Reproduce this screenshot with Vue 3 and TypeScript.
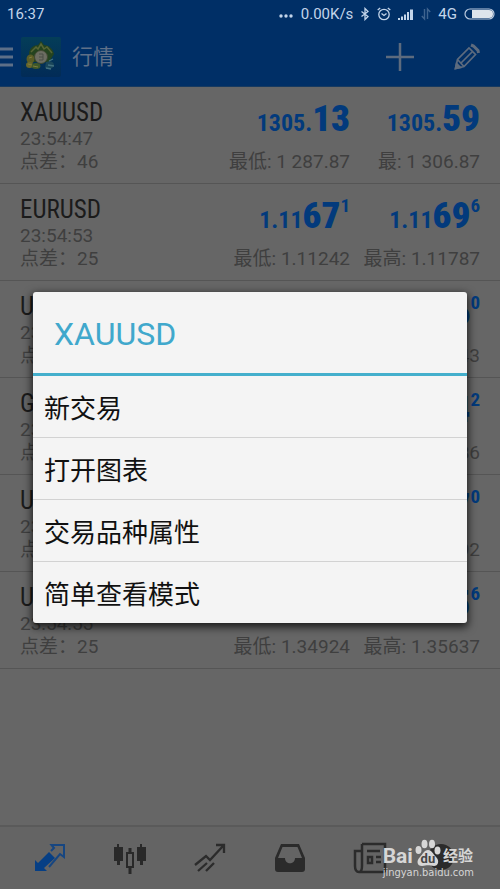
<script setup lang="ts">
interface Price {
  small: string
  big: string
  tip?: string
}

interface Quote {
  symbol: string
  time: string
  spread: number
  bid: Price
  ask: Price
  low: string
  highLabel: string
  high: string
}

const quotes: Quote[] = [
  { symbol: 'XAUUSD', time: '23:54:47', spread: 46, bid: { small: '1305.', big: '13' }, ask: { small: '1305.', big: '59' }, low: '1 287.87', highLabel: '最:', high: '1 306.87' },
  { symbol: 'EURUSD', time: '23:54:53', spread: 25, bid: { small: '1.11', big: '67', tip: '1' }, ask: { small: '1.11', big: '69', tip: '6' }, low: '1.11242', highLabel: '最高:', high: '1.11787' },
  { symbol: 'USDCHF', time: '23:54:53', spread: 28, bid: { small: '0.97', big: '73', tip: '2' }, ask: { small: '0.97', big: '76', tip: '0' }, low: '0.97201', highLabel: '最高:', high: '0.97943' },
  { symbol: 'GBPUSD', time: '23:54:54', spread: 30, bid: { small: '1.22', big: '41', tip: '2' }, ask: { small: '1.22', big: '44', tip: '2' }, low: '1.22081', highLabel: '最高:', high: '1.22586' },
  { symbol: 'USDJPY', time: '23:54:54', spread: 23, bid: { small: '103.', big: '24', tip: '7' }, ask: { small: '103.', big: '27', tip: '0' }, low: '102.805', highLabel: '最高:', high: '103.892' },
  { symbol: 'USDCAD', time: '23:54:55', spread: 25, bid: { small: '1.35', big: '13', tip: '1' }, ask: { small: '1.35', big: '15', tip: '6' }, low: '1.34924', highLabel: '最高:', high: '1.35637' },
]

const actions: string[] = ['新交易', '打开图表', '交易品种属性', '简单查看模式']
</script>

<template>
  <div class="screen">
    <div class="status">
      <span>16:37</span>
      <div class="status-right">
        <svg class="dots" width="16" height="14" viewBox="0 0 16 14"><circle cx="3" cy="9" r="1.7" /><circle cx="8" cy="9" r="1.7" /><circle cx="13" cy="9" r="1.7" /></svg>
        <span>0.00K/s</span>
        <svg class="line" width="10" height="14" viewBox="0 0 10 14"><path d="M1.500 4.500l6.500 5L5 12.500v-11l3 3-6.500 5" stroke-width="1.3" /></svg>
        <svg class="line" width="14" height="14" viewBox="0 0 14 14"><circle cx="7" cy="7.5" r="5.2" stroke-width="1.3" /><path d="M4.5 6.5L7 8.5l2.5-2M.7 3L3.2.9M13.3 3L10.8.9" stroke-width="1.3" /></svg>
        <svg class="fill" width="16" height="14" viewBox="0 0 16 14"><path d="M0 11h2v2H0zM3 9.500h2V13H3zM6 7.500h2V13H6zM9 5h2v8H9zM12 2.500h3V13h-3z" /></svg>
        <svg class="line faint" width="10" height="14" viewBox="0 0 10 14"><path d="M3.500 2v10L.8 9M6.500 12V2l2.700 3" stroke-width="1.4" /></svg>
        <span>4G</span>
        <svg width="32" height="14" viewBox="0 0 32 14"><rect x="1" y="2" width="29" height="10" rx="5" fill="none" stroke="#b9c9de" stroke-width="1.2" /><path d="M8 3h17a4 4 0 0 1 0 8H8z" fill="#dde4ec" /></svg>
      </div>
    </div>

    <header class="bar">
      <button class="icon menu" aria-label="菜单">
        <svg width="13" height="20" viewBox="0 0 13 20"><path d="M0 2h13M0 10h13M0 18h13" stroke="#5d6f88" stroke-width="3" /></svg>
      </button>
      <svg class="logo" width="40" height="40" viewBox="0 0 40 40">
        <defs>
          <linearGradient id="sky" x1="0" y1="0" x2="0" y2="1"><stop offset="0" stop-color="#043d58" /><stop offset="1" stop-color="#022b57" /></linearGradient>
        </defs>
        <rect width="40" height="40" rx="2" fill="url(#sky)" />
        <path d="M8 17c0-6 5-9 9-9l3-4 3 4c5 0 9 4 10 9l-5 8H12z" fill="#24431f" />
        <path d="M10 15l5-5 2 2 3-5 3 5 3-2 5 6" fill="none" stroke="#566434" stroke-width="1.500" />
        <ellipse cx="9.500" cy="22" rx="4" ry="4.500" fill="#5a5c26" /><ellipse cx="8.500" cy="28" rx="3.500" ry="3" fill="#68662b" />
        <ellipse cx="15" cy="29" rx="4.500" ry="3" fill="#3f5829" />
        <path d="M8 21l3-1M7 27l4 1M12 29l5 1" stroke="#807c3c" />
        <path d="M25 25c4-2 8 0 8 3s-5 5-9 3z" fill="#1a465a" />
        <path d="M28 24l4-2M27 28l6 1M25 31l5 1" stroke="#42707e" stroke-width="1.300" />
        <circle cx="20" cy="20" r="6.500" fill="#6c6d62" stroke="#3f4830" /><path d="M18 17h4v6h-4M18 20h4" fill="none" stroke="#4a4e46" />
      </svg>
      <h1>行情</h1>
      <button class="icon add" aria-label="添加"><svg width="28" height="28" viewBox="0 0 28 28"><path d="M14 0v28M0 14h28" stroke="#5d6b7e" stroke-width="2.500" /></svg></button>
      <button class="icon edit" aria-label="编辑">
        <svg width="28" height="28" viewBox="0 0 28 28" fill="none" stroke="#5d6b7e" stroke-width="1.700"><path d="M2.500 25.500l2-9L16 5l6.500 6.500-11.500 12zM4.500 16.500l6.500 7M8 20L19.500 8.500" /><path d="M18 2l2.500 1L25 7.500l.5 2.500" stroke-width="3" /><path d="M2.500 25.500l1-5 4 4z" fill="#5d6b7e" /></svg>
      </button>
    </header>

    <main class="quotes">
      <article v-for="q in quotes" :key="q.symbol" class="quote">
        <div class="info">
          <h2>{{ q.symbol }}</h2>
          <p>{{ q.time }}</p>
          <p>点差：{{ q.spread }}</p>
        </div>
        <div class="side">
          <div class="price">{{ q.bid.small }}<b>{{ q.bid.big }}</b><i v-if="q.bid.tip">{{ q.bid.tip }}</i></div>
          <p>最低: {{ q.low }}</p>
        </div>
        <div class="side">
          <div class="price">{{ q.ask.small }}<b>{{ q.ask.big }}</b><i v-if="q.ask.tip">{{ q.ask.tip }}</i></div>
          <p>{{ q.highLabel }} {{ q.high }}</p>
        </div>
      </article>
    </main>

    <nav class="tabs">
      <button class="icon" aria-label="行情"><svg width="32" height="32" viewBox="0 0 32 32"><path d="M1 29V18l3 3L15 10l6 6-11 10 3 3z" fill="#063f85" /><path d="M17 9l3-3-2.500-3H30v12l-4-3-11 13" fill="none" stroke="#174681" stroke-width="2" /></svg></button>
      <button class="icon" aria-label="图表"><svg width="34" height="34" viewBox="0 0 34 34"><path d="M1 6h3V3h2v3h4v14H7v4H4v-4H1zM24 6h3V3h2v3h4v14h-3v4h-3v-4h-3z" fill="#292929" /><path d="M17 7v4M17 27v6" stroke="#292929" stroke-width="3" /><path d="M14 12h6v14h-6z" fill="none" stroke="#292929" stroke-width="2" /></svg></button>
      <button class="icon" aria-label="交易"><svg width="32" height="32" viewBox="0 0 32 32" fill="none" stroke="#2b2b2b" stroke-width="2.300"><path d="M1 23l11-9 4 4L29 4M22 3h8v8M4 29l9-8M12 29l8-8" /></svg></button>
      <button class="icon" aria-label="收件箱"><svg width="32" height="32" viewBox="0 0 32 32"><path d="M7 2h18l6 14v11a3 3 0 0 1-3 3H4a3 3 0 0 1-3-3V16zM8.500 5L4 16h7c0 7 10 7 10 0h7L23.500 5z" fill="#2b2b2b" fill-rule="evenodd" /></svg></button>
      <button class="icon" aria-label="新闻"><svg width="34" height="32" viewBox="0 0 34 32" fill="none" stroke="#2b2b2b" stroke-width="2.500"><path d="M9 2h23v26a2 2 0 0 1-2 2H6c-4 0-4-4-4-6V9h6M9 2v22c0 3-1 6-3 6M14 9h13M23 15h5M23 20h5M15 15h4v6h-4z" /></svg></button>
      <button class="icon chat" aria-label="消息"><svg width="28" height="28" viewBox="0 0 28 28"><circle cx="14" cy="13" r="13" fill="#2b2b2b" /></svg></button>
    </nav>

    <div class="layer">
      <section class="dialog" role="dialog" aria-modal="true" aria-labelledby="dialog-title">
        <h2 id="dialog-title">XAUUSD</h2>
        <ul>
          <li v-for="a in actions" :key="a"><button>{{ a }}</button></li>
        </ul>
      </section>
    </div>

    <div class="mark">
      <div class="mark-name">
        <span class="bai">Bai</span>
        <span class="paw">
          <svg width="26" height="28" viewBox="0 0 26 28" fill="#d6d6d6"><ellipse cx="3.500" cy="11" rx="3" ry="4" /><ellipse cx="9.500" cy="5" rx="3" ry="4.300" /><ellipse cx="17" cy="5" rx="3" ry="4.300" /><ellipse cx="22.500" cy="11.500" rx="3" ry="4" /><path d="M13 11c4 0 5 4 8 7 4 4 2 9-2 9-3 0-4-.7-6-.7s-3 .7-6 .7c-5 0-6-5-2-9 3-3 4-7 8-7z" /></svg>
          <span class="du">du</span>
        </span>
        <span class="jy">经验</span>
      </div>
      <div class="mark-url">jingyan.baidu.com</div>
    </div>
  </div>
</template>

<style>
body {
  margin: 0;
  background: #666;
}
</style>

<style scoped>
.screen {
  position: relative;
  min-height: 100vh;
  display: flex;
  flex-direction: column;
  background: #666;
  color: #3f3f3f;
  font-family: Roboto, "Noto Sans CJK SC", sans-serif;
}
h1, h2, p, ul {
  margin: 0;
  padding: 0;
  font-weight: 400;
}
svg {
  display: block;
}
button {
  margin: 0;
  padding: 0;
  border: 0;
  background: none;
  font: inherit;
  color: inherit;
}
.status {
  height: 27px;
  padding: 0 4px 0 7px;
  display: flex;
  align-items: center;
  justify-content: space-between;
  background: #002f66;
  color: #c3d5ea;
  font-size: 15px;
}
.status-right {
  display: flex;
  align-items: center;
  gap: 7px;
}
.line {
  fill: none;
  stroke: #c3d5ea;
}
.faint {
  stroke: #3f648f;
}
.dots, .fill {
  fill: #c3d5ea;
}
.bar {
  height: 60px;
  box-sizing: border-box;
  padding-right: 19px;
  border-bottom: 1px solid #173a60;
  display: flex;
  align-items: center;
  background: #002f66;
}
.logo {
  margin-left: 8px;
}
.bar h1 {
  flex: 1;
  margin-left: 11px;
  font-size: 21px;
  line-height: 28px;
  color: #5f7088;
}
.add {
  margin-right: 39px;
}
.quote {
  height: 96px;
  padding: 0 20px;
  border-bottom: 1px solid #555;
  display: grid;
  grid-template-columns: 1fr 130px 130px;
}
.info {
  padding-top: 10px;
}
.info h2 {
  padding-top: 2px;
  font-family: "Roboto Condensed", "Liberation Sans Narrow", Roboto, sans-serif;
  font-size: 25px;
  line-height: 28px;
  color: #1b1b1b;
}
.quote p {
  font-size: 19px;
  line-height: 23px;
  white-space: nowrap;
}
.side {
  padding-top: 9px;
  text-align: right;
}
.price {
  height: 54px;
  line-height: 46px;
  font-family: "Roboto Condensed", "Liberation Sans Narrow", Roboto, sans-serif;
  font-size: 24px;
  font-weight: 700;
  color: #023a7c;
  white-space: nowrap;
}
.price b {
  font-size: 37px;
}
.price i {
  font-size: 19px;
  font-style: normal;
  line-height: 20px;
  vertical-align: 16px;
}
.tabs {
  margin-top: auto;
  height: 62px;
  padding: 0 10px;
  border-top: 2px solid #5a5a5a;
  display: grid;
  grid-template-columns: repeat(6, 1fr);
  background: #646464;
}
.tabs .icon {
  display: flex;
  align-items: center;
  justify-content: center;
}
.tabs .chat {
  padding-right: 18px;
}
.layer {
  position: absolute;
  inset: 26px 0 0;
  padding: 0 33px;
  display: flex;
  align-items: center;
}
.dialog {
  flex: 1;
  border-radius: 3px;
  background: #f4f4f4;
  box-shadow: 0 3px 9px 1px rgba(0, 0, 0, 0.75);
}
.dialog h2 {
  padding: 3px 21px 0;
  border-bottom: 3px solid #44afcc;
  font-size: 32px;
  line-height: 78px;
  color: #40a8cc;
}
.dialog ul {
  list-style: none;
}
.dialog li + li {
  border-top: 1px solid #d2d2d2;
}
.dialog li button {
  display: block;
  width: 100%;
  padding: 5px 11px 0;
  font-size: 26px;
  line-height: 56px;
  text-align: left;
  color: #111;
}
.mark {
  position: absolute;
  right: 26px;
  bottom: 11px;
  color: #d6d6d6;
}
.mark-name {
  display: flex;
  align-items: flex-end;
  gap: 2px;
}
.bai {
  font-size: 21px;
  line-height: 22px;
  font-weight: 700;
}
.paw {
  position: relative;
}
.du {
  position: absolute;
  inset: auto 0 2px;
  text-align: center;
  font-size: 13px;
  line-height: 13px;
  font-weight: 700;
  color: #444;
}
.jy {
  font-size: 15px;
  line-height: 22px;
  font-weight: 700;
}
.mark-url {
  font-family: "DejaVu Sans Condensed", "Noto Sans", sans-serif;
  font-size: 11px;
  line-height: 11px;
}
</style>
